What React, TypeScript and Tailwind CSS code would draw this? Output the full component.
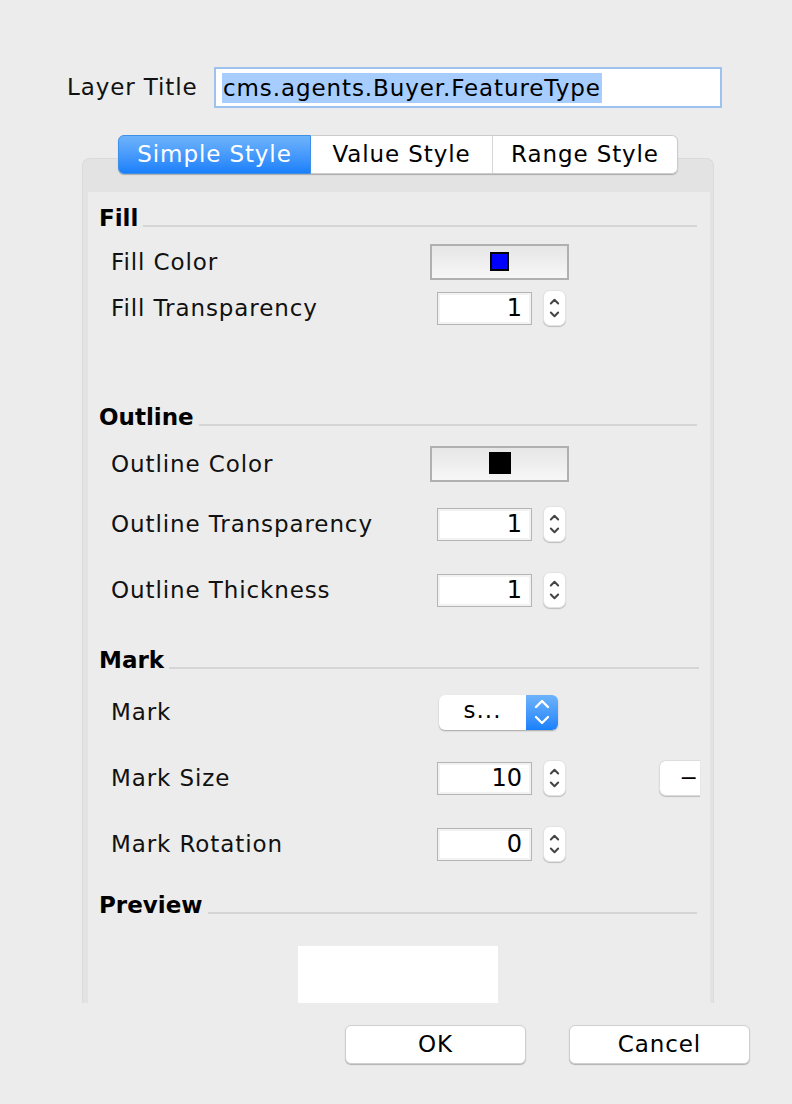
import React from 'react'

const font = { fontFamily: '"DejaVu Sans", "Liberation Sans", sans-serif' }

function SectionHeader({ title, mt, pr = 'pr-[13px]' }: { title: string; mt: string; pr?: string }) {
  return (
    <div className={`flex items-center h-[28px] pl-[11px] ${pr} ${mt}`}>
      <span className="text-[23px] font-bold text-black leading-none">{title}</span>
      <div className="flex-1 h-[2px] bg-[#d5d5d5] ml-[5px] mt-[16px]" />
    </div>
  )
}

function Row({ label, mt, children }: { label: string; mt: string; children: React.ReactNode }) {
  return (
    <div className={`flex items-center h-[36px] ${mt}`}>
      <div className="w-[342px] pl-[23px] text-[23px] tracking-[0.9px] text-[#111] leading-none">{label}</div>
      <div className="flex items-center">{children}</div>
    </div>
  )
}

function ColorButton({ swatch }: { swatch: 'blue' | 'black' }) {
  return (
    <div className="w-[139px] h-[36px] border-2 border-[#b0b0b0] bg-gradient-to-b from-[#e6e6e6] to-[#f7f7f7] flex items-center justify-center">
      {swatch === 'blue' ? (
        <div className="w-[19px] h-[19px] bg-[#0000ff] border-[2px] border-black -mt-[2px]" />
      ) : (
        <div className="w-[22px] h-[22px] bg-black -mt-[2px]" />
      )}
    </div>
  )
}

function Spinner() {
  return (
    <div className="ml-[11px] w-[23px] h-[36px] bg-white rounded-[7px] border border-[#e2e2e2] shadow-[0_1px_1px_rgba(0,0,0,0.2)] flex items-center justify-center">
      <svg width="23" height="36" viewBox="0 0 23 36" fill="none" stroke="#444" strokeWidth="2.2" strokeLinecap="round" strokeLinejoin="round">
        <path d="M7.5 13 L11.5 9 L15.5 13" />
        <path d="M7.5 23 L11.5 27 L15.5 23" />
      </svg>
    </div>
  )
}

function NumberField({ value }: { value: string }) {
  return (
    <div className="flex items-center ml-[7px]">
      <div className="w-[95px] h-[33px] border border-[#b4b4b4] bg-white shadow-[inset_0_0_0_2px_#f2f2f2] flex items-center justify-end pr-[9px] text-[24px] text-black leading-none">
        {value}
      </div>
      <Spinner />
    </div>
  )
}

function Tab({ label, active, cls }: { label: string; active?: boolean; cls: string }) {
  return (
    <div
      className={`h-[39px] flex items-center justify-center text-[23px] tracking-[0.9px] leading-none ${cls} ${
        active
          ? 'bg-gradient-to-b from-[#6db3fb] to-[#1780fb] text-white border border-[#3d8fe8]'
          : 'bg-white text-black border-y border-[#cbcbcb]'
      }`}
    >
      {label}
    </div>
  )
}

export default function App() {
  return (
    <div className="w-[792px] h-[1104px] bg-[#ececec] overflow-hidden" style={font}>
      {/* Layer title */}
      <div className="flex items-center pt-[67px] pl-[67px]">
        <div className="w-[147px] text-[23px] tracking-[0.9px] text-[#111] leading-none">Layer Title</div>
        <div className="w-[508px] h-[41px] bg-white border-2 border-[#9ec2f0] flex items-center pl-[6px]">
          <span className="bg-[#a6cdfe] text-[23px] tracking-[0.9px] text-black leading-[30px] px-[1px]">
            cms.agents.Buyer.FeatureType
          </span>
        </div>
      </div>

      {/* Tabs */}
      <div className="relative z-10 ml-[82px] w-[632px] mt-[27px] flex justify-center">
        <div className="flex rounded-[6px] shadow-[0_1px_1px_rgba(0,0,0,0.25)]">
          <Tab label="Simple Style" active cls="w-[193px] rounded-l-[6px]" />
          <Tab label="Value Style" cls="w-[182px] border-r border-r-[#d6d6d6]" />
          <Tab label="Range Style" cls="w-[185px] rounded-r-[6px] border-r border-r-[#cbcbcb]" />
        </div>
      </div>

      {/* Tab panel */}
      <div className="-mt-[16px] ml-[82px] w-[632px] h-[845px] bg-[#e3e3e3] border-x border-t border-[#dadada] rounded-t-[8px] pl-[5px] pr-[3px] pt-[33px]">
        <div className="h-full bg-[#ececec] overflow-hidden">
          <SectionHeader title="Fill" mt="mt-[12px]" />
          <Row label="Fill Color" mt="mt-[12px]">
            <ColorButton swatch="blue" />
          </Row>
          <Row label="Fill Transparency" mt="mt-[10px]">
            <NumberField value="1" />
          </Row>

          <SectionHeader title="Outline" mt="mt-[77px]" />
          <Row label="Outline Color" mt="mt-[15px]">
            <ColorButton swatch="black" />
          </Row>
          <Row label="Outline Transparency" mt="mt-[24px]">
            <NumberField value="1" />
          </Row>
          <Row label="Outline Thickness" mt="mt-[30px]">
            <NumberField value="1" />
          </Row>

          <SectionHeader title="Mark" mt="mt-[38px]" pr="pr-[11px]" />
          <Row label="Mark" mt="mt-[20px]">
            <div className="ml-[9px] w-[119px] h-[35px] flex rounded-[6px] bg-white shadow-[0_1px_1.5px_rgba(0,0,0,0.3)] overflow-hidden">
              <div className="flex-1 flex items-center justify-center text-[23px] tracking-[1px] text-black leading-none pb-[3px]">
                s...
              </div>
              <div className="w-[32px] h-full bg-gradient-to-b from-[#6db3fb] to-[#1780fb] flex items-center justify-center">
                <svg width="32" height="35" viewBox="0 0 32 35" fill="none" stroke="white" strokeWidth="2.4" strokeLinecap="round" strokeLinejoin="round">
                  <path d="M10 12 L16 6 L22 12" />
                  <path d="M10 22 L16 28 L22 22" />
                </svg>
              </div>
            </div>
          </Row>
          <Row label="Mark Size" mt="mt-[30px]">
            <NumberField value="10" />
            <div className="ml-[93px] w-[41px] h-[36px] bg-white rounded-l-[7px] border-l border-y border-[#dcdcdc] shadow-[0_1px_1px_rgba(0,0,0,0.2)] flex items-center justify-end pr-[2px] text-[22px] text-black leading-none">
              −
            </div>
          </Row>
          <Row label="Mark Rotation" mt="mt-[30px]">
            <NumberField value="0" />
          </Row>

          <SectionHeader title="Preview" mt="mt-[29px]" />
          <div className="mt-[27px] ml-[210px] w-[200px] h-[120px] bg-white" />
        </div>
      </div>

      {/* Buttons */}
      <div className="flex ml-[345px] mt-[22px] gap-[43px]">
        <div className="w-[181px] h-[39px] bg-white rounded-[6px] border border-[#cfcfcf] shadow-[0_1px_1px_rgba(0,0,0,0.25)] flex items-center justify-center text-[23px] tracking-[0.9px] text-black leading-none">
          OK
        </div>
        <div className="w-[181px] h-[39px] bg-white rounded-[6px] border border-[#cfcfcf] shadow-[0_1px_1px_rgba(0,0,0,0.25)] flex items-center justify-center text-[23px] tracking-[0.9px] text-black leading-none">
          Cancel
        </div>
      </div>
    </div>
  )
}
